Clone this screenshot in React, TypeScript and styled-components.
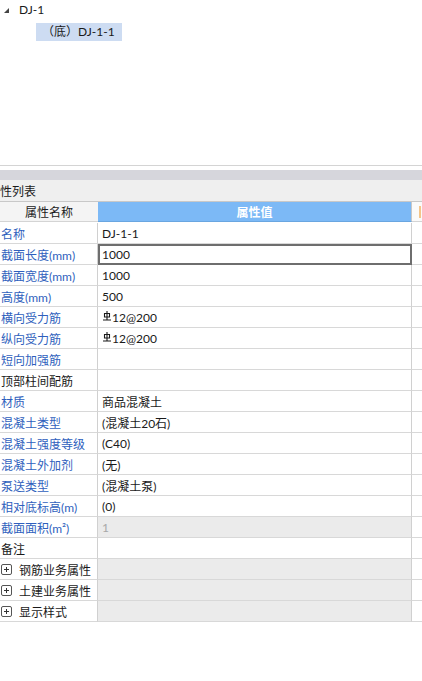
import React from "react";
import styled, { createGlobalStyle } from "styled-components";

const Global = createGlobalStyle`
  html, body { margin: 0; padding: 0; background: #ffffff; }
  body {
    font-family: "Lato", "Noto Sans CJK SC", "Noto Sans", sans-serif;
    font-size: 12px;
    color: #1a1a1a;
    overflow: hidden;
  }
`;

const Page = styled.div`
  width: 422px;
  height: 681px;
  display: flex;
  flex-direction: column;
  overflow: hidden;
`;

const Tree = styled.div`
  height: 166px;
  border-bottom: 1px solid #d4d4d4;
  display: flex;
  flex-direction: column;
  box-sizing: border-box;
`;

const TreeRow = styled.div<{ $indent: number; $top: number }>`
  height: 19px;
  display: flex;
  align-items: center;
  padding-left: ${(p) => p.$indent}px;
  margin-top: ${(p) => p.$top}px;
`;

const Caret = styled.span`
  width: 0;
  height: 0;
  border-left: 5px solid transparent;
  border-bottom: 5px solid #444;
  margin-right: 10px;
  margin-top: 1px;
`;

const TreeLabel = styled.span<{ $selected?: boolean }>`
  line-height: 18px;
  height: 18px;
  padding: ${(p) => (p.$selected ? "0 7px 0 6px" : "0")};
  background: ${(p) => (p.$selected ? "#cddcf2" : "transparent")};
  color: #1a1a1a;
  font-size: 12px;
`;

const Gap = styled.div`
  height: 4px;
`;

const Band = styled.div`
  height: 10px;
  background: #d6d6dc;
`;

const TitleBar = styled.div`
  height: 21px;
  background: #efefef;
  border-bottom: 1px solid #c8c8c8;
  display: flex;
  align-items: center;
  overflow: hidden;
`;

const TitleText = styled.span`
  margin-left: -12px;
  font-size: 12px;
  color: #1a1a1a;
`;

const Grid = styled.div`
  display: grid;
  grid-template-columns: 98px 314px 10px;
  grid-auto-rows: 21px;
`;

const HeadCell = styled.div<{ $kind: "name" | "value" | "extra" }>`
  box-sizing: border-box;
  display: flex;
  align-items: center;
  justify-content: center;
  background: ${(p) =>
    p.$kind === "value" ? "#7cb9f6" : p.$kind === "name" ? "#f4f4f4" : "#fafafa"};
  color: ${(p) => (p.$kind === "value" ? "#ffffff" : "#1a1a1a")};
  font-weight: ${(p) => (p.$kind === "value" ? 700 : 400)};
  border-bottom: 1px solid ${(p) => (p.$kind === "value" ? "#6aa6e0" : "#d4d4d4")};
  border-right: ${(p) => (p.$kind === "value" ? "1px solid #c8c8c8" : "none")};
  height: 20px;
  position: relative;
`;

const OrangeMark = styled.span`
  position: absolute;
  left: 7px;
  top: 4px;
  width: 2px;
  height: 12px;
  background: #f3c58a;
`;

const NameCell = styled.div<{ $blue: boolean }>`
  box-sizing: border-box;
  border-bottom: 1px solid #d8d8d8;
  border-right: 1px solid #d0d0d0;
  display: flex;
  align-items: center;
  padding-left: 1px;
  color: ${(p) => (p.$blue ? "#2f5fbd" : "#1a1a1a")};
  white-space: nowrap;
  overflow: hidden;
`;

const ValueCell = styled.div<{ $gray: boolean; $selected: boolean; $dim: boolean }>`
  box-sizing: border-box;
  border-bottom: 1px solid #d8d8d8;
  border-right: 1px solid #d0d0d0;
  background: ${(p) => (p.$gray ? "#ebebeb" : "#ffffff")};
  display: flex;
  align-items: center;
  padding-left: 4px;
  color: ${(p) => (p.$dim ? "#a8a8a8" : "#1a1a1a")};
  white-space: nowrap;
  ${(p) => (p.$selected ? `outline: 2px solid #6e6e6e; outline-offset: -2px;` : "")}
`;

const ExtraCell = styled.div`
  box-sizing: border-box;
  border-bottom: 1px solid #d8d8d8;
`;

const PlusBox = styled.span`
  box-sizing: border-box;
  width: 11px;
  height: 11px;
  border: 1px solid #555;
  border-radius: 2px;
  display: inline-flex;
  align-items: center;
  justify-content: center;
  margin-right: 7px;
  position: relative;
  &::before {
    content: "";
    position: absolute;
    width: 5px;
    height: 1px;
    background: #333;
  }
  &::after {
    content: "";
    position: absolute;
    width: 1px;
    height: 5px;
    background: #333;
  }
`;

const RebarIcon = styled.svg`
  margin-left: 1px;
  margin-right: 1px;
  margin-top: -3px;
  flex: none;
`;

const Rebar = () => (
  <RebarIcon width="8" height="10" viewBox="0 0 8 10">
    <path
      d="M4 0V8.5M1.5 2.5H6.5V6H1.5Z M0 9H8"
      stroke="#1a1a1a"
      strokeWidth="1.1"
      fill="none"
    />
  </RebarIcon>
);

type Row = {
  name: string;
  value?: React.ReactNode;
  blue?: boolean;
  gray?: boolean;
  group?: boolean;
  selected?: boolean;
  dim?: boolean;
};

const rows: Row[] = [
  { name: "名称", value: "DJ-1-1", blue: true },
  { name: "截面长度(mm)", value: "1000", blue: true, selected: true },
  { name: "截面宽度(mm)", value: "1000", blue: true },
  { name: "高度(mm)", value: "500", blue: true },
  { name: "横向受力筋", value: <><Rebar />12@200</>, blue: true },
  { name: "纵向受力筋", value: <><Rebar />12@200</>, blue: true },
  { name: "短向加强筋", value: "", blue: true },
  { name: "顶部柱间配筋", value: "" },
  { name: "材质", value: "商品混凝土", blue: true },
  { name: "混凝土类型", value: "(混凝土20石)", blue: true },
  { name: "混凝土强度等级", value: "(C40)", blue: true },
  { name: "混凝土外加剂", value: "(无)", blue: true },
  { name: "泵送类型", value: "(混凝土泵)", blue: true },
  { name: "相对底标高(m)", value: "(0)", blue: true },
  { name: "截面面积(m²)", value: "1", blue: true, gray: true, dim: true },
  { name: "备注", value: "" },
  { name: "钢筋业务属性", group: true, gray: true },
  { name: "土建业务属性", group: true, gray: true },
  { name: "显示样式", group: true, gray: true },
];

export default function App() {
  return (
    <Page>
      <Global />
      <Tree>
        <TreeRow $indent={4} $top={0}>
          <Caret />
          <TreeLabel>DJ-1</TreeLabel>
        </TreeRow>
        <TreeRow $indent={36} $top={3}>
          <TreeLabel $selected>（底）DJ-1-1</TreeLabel>
        </TreeRow>
      </Tree>
      <Gap />
      <Band />
      <TitleBar>
        <TitleText>属性列表</TitleText>
      </TitleBar>
      <Grid>
        <HeadCell $kind="name">属性名称</HeadCell>
        <HeadCell $kind="value">属性值</HeadCell>
        <HeadCell $kind="extra">
          <OrangeMark />
        </HeadCell>
        {rows.map((r, i) => (
          <React.Fragment key={i}>
            <NameCell $blue={!!r.blue}>
              {r.group && <PlusBox />}
              {r.name}
            </NameCell>
            <ValueCell $gray={!!r.gray} $selected={!!r.selected} $dim={!!r.dim}>
              {r.value}
            </ValueCell>
            <ExtraCell />
          </React.Fragment>
        ))}
      </Grid>
    </Page>
  );
}
